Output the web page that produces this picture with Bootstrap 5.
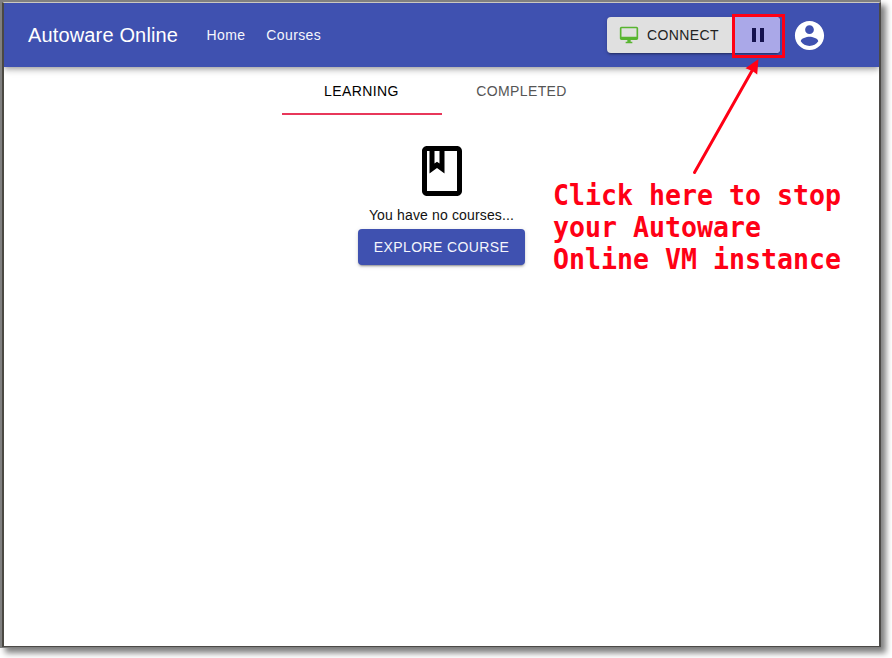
<!DOCTYPE html>
<html lang="en">
<head>
<meta charset="utf-8">
<title>Autoware Online</title>
<link href="https://cdn.jsdelivr.net/npm/bootstrap@5.3.0/dist/css/bootstrap.min.css" rel="stylesheet">
<style>
body{font-family:"Liberation Sans",Arial,sans-serif;font-size:14px;line-height:20px;background:#fff;height:658px;color:#111}
.window-frame{width:881px;height:648px;background:#808080;padding:2px 0 1px 2px;box-shadow:5px 5px 6px 0 #808080}
.window-body{width:879px;height:645px;border:1px solid #4b4946;border-left:2px solid #4b4943;border-top-color:#cbc8c0;border-right-width:2px;background:#fff}
.app-bar{height:64px;padding:0 24px;background:#3f51b0;box-shadow:0 2px 4px -1px rgba(0,0,0,.2),0 4px 5px rgba(0,0,0,.14),0 1px 10px rgba(0,0,0,.12);clip-path:inset(0 0 -16px 0);z-index:1}
.app-bar .navbar-brand{font-size:20px;line-height:32px;letter-spacing:.15px;margin-right:28.400px}
.app-bar .nav-link{font-size:14px;letter-spacing:.4px;margin-right:20.800px;padding:0;color:#f5f6fc}
.vm-buttons{height:36px;width:173px;border-radius:4px;background:#e0e0e0;box-shadow:0 3px 1px -2px rgba(0,0,0,.2),0 2px 2px rgba(0,0,0,.14),0 1px 5px rgba(0,0,0,.12)}
.btn-connect{width:126px;padding:0 0 0 12px;gap:8px;color:#222;font-size:14px;letter-spacing:.4px;border:0}
.btn-pause{width:47px;background:#aaa8e8!important;border:0;border-radius:0 4px 4px 0;padding:0 0 0 3px}
.callout-box{left:125px;top:-3px;width:53px;height:44px;border:3px solid #ff0015}
.account{margin-left:12px;margin-right:28px}
.course-tabs{width:320px;margin-left:278px;height:48px}
.course-tabs .nav-link{width:160px;height:48px;padding:0 1px 0 0;border:0;border-radius:0;letter-spacing:.4px;color:#555}
.course-tabs .nav-link.active{color:#000;border-bottom:2px solid #e8375a;padding-top:2px}
.empty-state{width:167px;margin-left:354px;padding-top:26px}
.empty-state p{margin:4px 0 4px 0;white-space:nowrap;font-size:14px;letter-spacing:.15px}
.btn-explore{height:36px;width:167px;padding:0;border:0;border-radius:4px;color:#f5f6fc;background:#3f51b0;font-size:14px;letter-spacing:.4px;box-shadow:0 3px 1px -2px rgba(0,0,0,.2),0 2px 2px rgba(0,0,0,.14),0 1px 5px rgba(0,0,0,.12)}
.arrow{left:0;top:0;z-index:3;pointer-events:none}
.note{left:553px;top:180px;font:bold 26.58px/30.2px "DejaVu Sans Mono",monospace;color:#ff0015;white-space:pre;transform:scaleY(1.06);transform-origin:0 0}
</style>
<script src="https://cdn.jsdelivr.net/npm/bootstrap@5.3.0/dist/js/bootstrap.bundle.min.js"></script>
</head>
<body class="position-relative overflow-hidden">
<div class="window-frame">
<div class="window-body">
<nav class="app-bar navbar navbar-dark d-flex flex-nowrap align-items-center justify-content-start position-relative">
<a class="navbar-brand p-0" href="#">Autoware Online</a>
<a class="nav-link" href="#">Home</a>
<a class="nav-link" href="#">Courses</a>
<div class="vm-buttons d-flex position-relative ms-auto">
<button class="btn btn-connect d-flex align-items-center"><svg width="20" height="20" viewBox="0 0 24 24" fill="#58b530"><path d="M21 2H3c-1.100 0-2 .9-2 2v12c0 1.100.9 2 2 2h7v2H8v2h8v-2h-2v-2h7c1.100 0 2-.9 2-2V4c0-1.100-.9-2-2-2zm0 12H3V4h18v10z"/></svg><span>CONNECT</span></button>
<button class="btn btn-pause d-flex align-items-center justify-content-center" aria-label="Pause"><svg width="24" height="24" viewBox="0 0 24 24" fill="#15124f"><path d="M6 5h4v14H6zM14 5h4v14h-4z"/></svg></button>
<div class="callout-box position-absolute"></div>
</div>
<svg class="account" width="35" height="35" viewBox="0 0 24 24" fill="#fff"><path d="M12 2C6.480 2 2 6.480 2 12s4.480 10 10 10 10-4.480 10-10S17.520 2 12 2zm0 3c1.660 0 3 1.340 3 3s-1.340 3-3 3-3-1.340-3-3 1.340-3 3-3zm0 14.200c-2.500 0-4.710-1.280-6-3.220.03-1.990 4-3.080 6-3.080 1.990 0 5.970 1.090 6 3.080-1.290 1.940-3.500 3.220-6 3.220z"/></svg>
</nav>
<ul class="nav course-tabs flex-nowrap">
<li class="nav-item"><a class="nav-link active d-flex align-items-center justify-content-center" href="#">LEARNING</a></li>
<li class="nav-item"><a class="nav-link d-flex align-items-center justify-content-center" href="#">COMPLETED</a></li>
</ul>
<div class="empty-state d-flex flex-column align-items-center">
<svg width="60" height="60" viewBox="0 0 24 24"><path fill="#000" d="M18 2H6c-1.100 0-2 .9-2 2v16c0 1.100.9 2 2 2h12c1.100 0 2-.9 2-2V4c0-1.100-.9-2-2-2zM9 4h2v5l-1-.750L9 9V4zm9 16H6V4h1v9l3-2.250L13 13V4h5v16z"/></svg>
<p>You have no courses...</p>
<button class="btn btn-explore">EXPLORE COURSE</button>
</div>
</div>
</div>
<svg class="arrow position-absolute" width="892" height="658"><path d="M694.500 172.500L753 69" stroke="#ff0015" stroke-width="3" stroke-linecap="round"/><path d="M758.500 59L757.200 74.500 752.500 71 745.500 68.300z" fill="#ff0015"/></svg>
<div class="note position-absolute">Click here to stop
your Autoware
Online VM instance</div>
</body>
</html>
